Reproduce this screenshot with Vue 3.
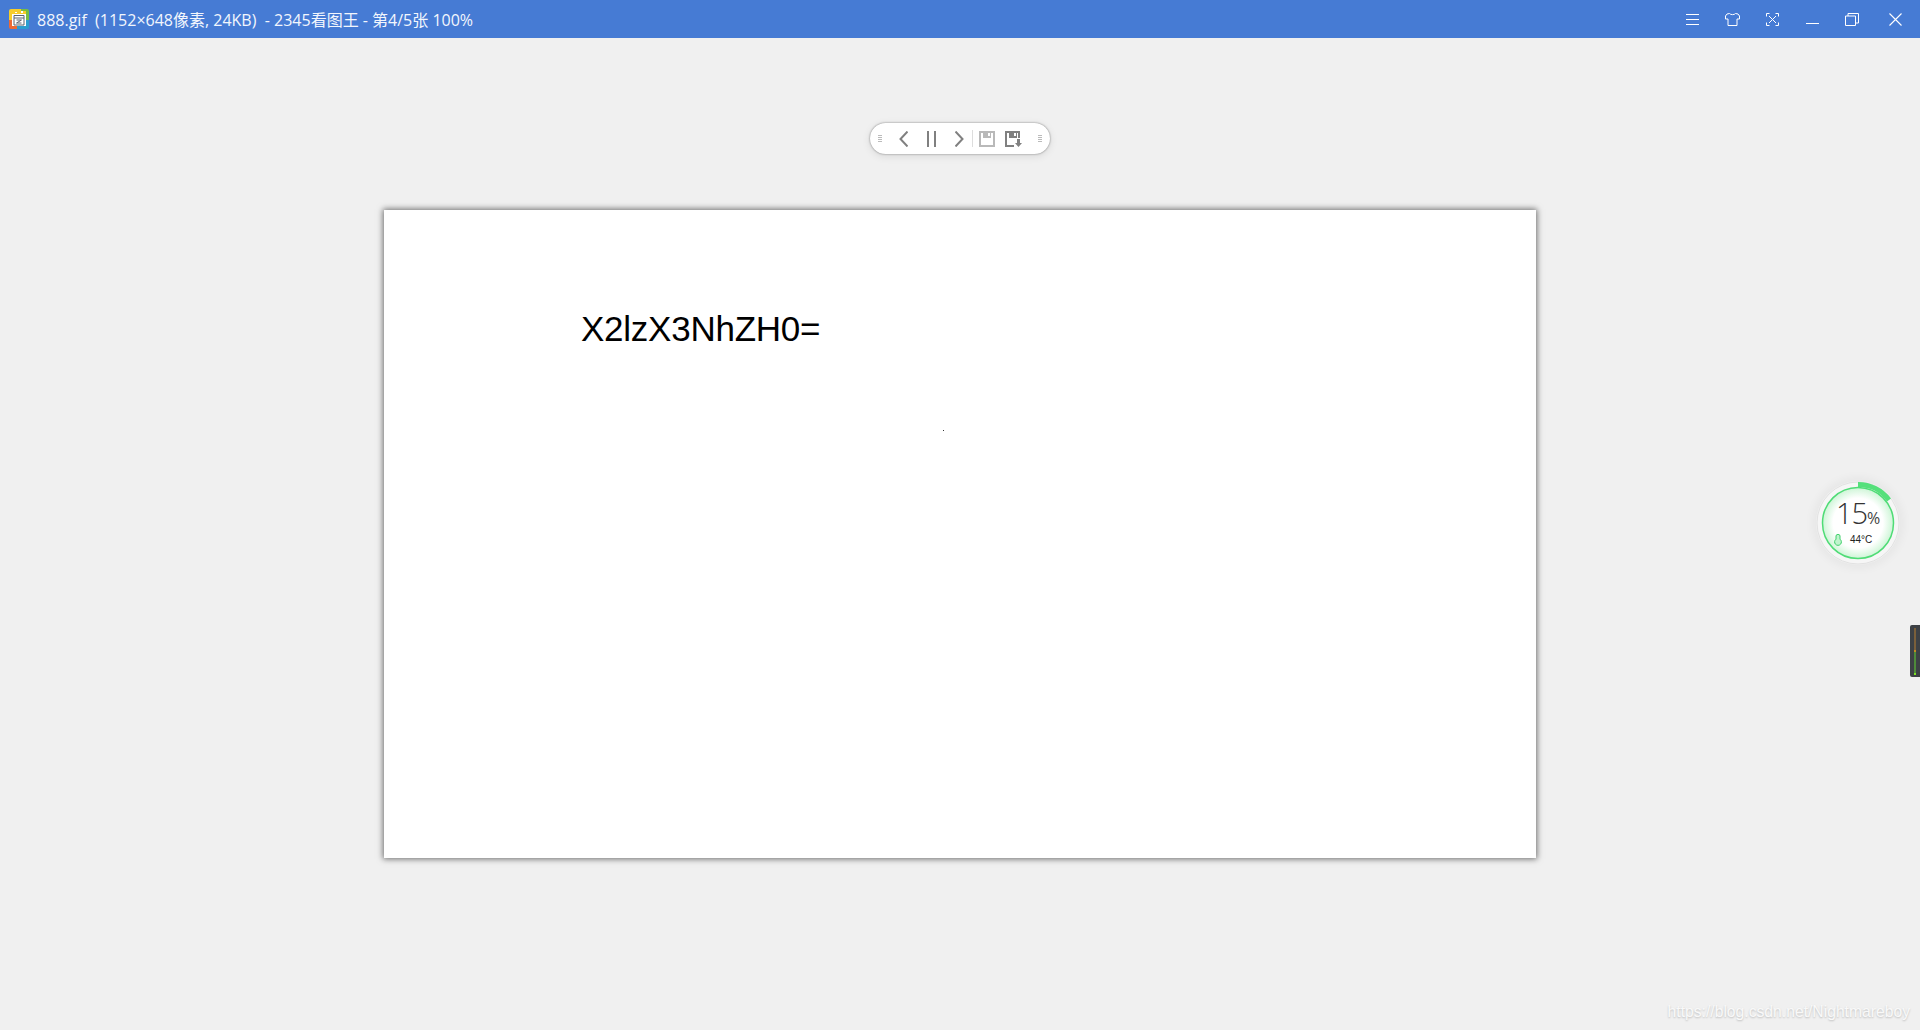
<script setup>
const title = '888.gif\u00a0\u00a0(1152×648像素, 24KB)\u00a0\u00a0- 2345看图王 - 第4/5张 100%'
</script>

<template>
  <div class="app">
    <header class="titlebar">
      <svg class="logo" width="20" height="20" viewBox="0 0 20 20">
        <path d="M2 0h10v11H0V2a2 2 0 0 1 2-2z" fill="#f7cd2a"/>
        <path d="M12 0h6a2 2 0 0 1 2 2v9h-8z" fill="#76bd45"/>
        <path d="M0 11h8v9H2a2 2 0 0 1-2-2z" fill="#ec6a35"/>
        <path d="M8 11h12v7a2 2 0 0 1-2 2H8z" fill="#2a9dcf"/>
        <rect x="3" y="3" width="14" height="14" fill="#fff"/>
        <path d="M3 2h3v2h2V2h4v2h2V2h3v3H3z" fill="#f7cd2a"/>
        <path d="M12 2h2v2h-2z" fill="#fff"/>
        <path d="M5 6.500h10v9.500H5zM5 9h10M7.500 11h5l-5 3h5" fill="none" stroke="#5b6470" stroke-width="1"/>
      </svg>
      <span class="title">{{ title }}</span>
      <div class="winbtns">
        <svg class="b-menu" width="13" height="11" viewBox="0 0 13 11"><path d="M0 .5h13M0 5.500h13M0 10.500h13" stroke="#fff" fill="none"/></svg>
        <svg class="b-skin" width="15" height="13" viewBox="0 0 15 13"><path d="M4.500.5 2 1 .5 3v3h2.500v6.500h9V6h2.500V3L13 1 10.500.5C9.500 2 5.500 2 4.500.5z" stroke="#fff" fill="none"/></svg>
        <svg class="b-full" width="13" height="13" viewBox="0 0 13 13"><path d="M.5 3.500v-3h3M9.500.5h3v3M12.500 9.500v3h-3M3.500 12.500h-3v-3M3 3l7 7M10 3l-7 7" stroke="#fff" fill="none"/></svg>
        <svg class="b-min" width="13" height="13" viewBox="0 0 13 13"><path d="M0 10.500h13" stroke="#fff" fill="none"/></svg>
        <svg class="b-max" width="14" height="13" viewBox="0 0 14 13"><path d="M.5 3h10v9.500H.5zM3 3V.5h10.500V10h-3" stroke="#fff" fill="none"/></svg>
        <svg class="b-close" width="13" height="13" viewBox="0 0 13 13"><path d="M.5.500l12 12M12.500.500l-12 12" stroke="#fff" stroke-width="1.100" fill="none"/></svg>
      </div>
    </header>

    <main class="stage">
      <div class="picture">
        <span class="picture-text">X2lzX3NhZH0=</span>
        <i class="speck"></i>
      </div>

      <div class="toolbar">
        <span class="grip"></span>
        <svg class="t-prev" width="9" height="16" viewBox="0 0 9 16"><path d="M8.500 .5 1.500 8l7 7.500" stroke="#808080" stroke-width="2" fill="none"/></svg>
        <svg class="t-pause" width="9" height="16" viewBox="0 0 9 16"><path d="M1 0v16M8 0v16" stroke="#808080" stroke-width="2" fill="none"/></svg>
        <svg class="t-next" width="9" height="16" viewBox="0 0 9 16"><path d="M.5 .5l7 7.500-7 7.500" stroke="#808080" stroke-width="2" fill="none"/></svg>
        <span class="sep"></span>
        <svg class="t-save" width="16" height="16" viewBox="0 0 16 16"><path d="M1 1h14v14H1z" fill="none" stroke="#b9b9b9" stroke-width="2"/><rect x="4" y="1" width="8" height="6" fill="#b9b9b9"/><rect x="9" y="2" width="2" height="3" fill="#fff"/></svg>
        <svg class="t-saveas" width="17" height="16" viewBox="0 0 17 16"><path d="M14 7V1H1v14h8" fill="none" stroke="#808080" stroke-width="2"/><rect x="4" y="1" width="8" height="6" fill="#808080"/><rect x="9" y="2" width="2" height="3" fill="#fff"/><path d="M12 8h3v4h2l-3.500 4-3.500-4h2z" fill="#808080"/></svg>
        <span class="grip"></span>
      </div>

      <div class="gauge">
        <svg class="gauge-ring" width="84" height="84" viewBox="0 0 84 84">
          <defs>
            <radialGradient id="gaugeFill" cx="50%" cy="50%" r="50%">
              <stop offset="0%" stop-color="#ffffff"/>
              <stop offset="70%" stop-color="#ffffff"/>
              <stop offset="100%" stop-color="#cdf5d6"/>
            </radialGradient>
          </defs>
          <circle cx="42" cy="42" r="41" fill="#f6f6f6" stroke="#e2e2e2" stroke-width="1"/>
          <path d="M42 3.500A38.500 38.500 0 0 1 73 19" fill="none" stroke="#55e07b" stroke-width="5"/>
          <circle cx="42" cy="42" r="35.500" fill="url(#gaugeFill)" stroke="#4fdc76" stroke-width="1.500"/>
        </svg>
        <div class="gauge-num">15<small>%</small></div>
        <div class="gauge-temp">
          <svg width="8" height="12" viewBox="0 0 8 12"><path d="M2 2a2 1.600 0 0 1 4 0v3.200a3.400 3.400 0 1 1-4 0z" fill="#bff4cd" stroke="#3fd06a" stroke-width="1"/></svg>
          <span>44°C</span>
        </div>
      </div>

      <div class="meter"><i class="meter-top"></i><i class="meter-mark"></i><i class="meter-bottom"></i><i class="meter-end"></i></div>

      <span class="watermark">https://blog.csdn.net/Nightmareboy</span>
    </main>
  </div>
</template>

<style>
html, body { margin: 0; background: #f0f0f0; }
</style>

<style scoped>
.app {
  width: 1920px;
  height: 1030px;
  display: flex;
  flex-direction: column;
  overflow: hidden;
  background: #f0f0f0;
  font-family: "Liberation Sans", Arial, sans-serif;
}
.titlebar {
  height: 38px;
  flex: none;
  display: flex;
  align-items: center;
  padding: 0 18px 0 9px;
  box-sizing: border-box;
  background: #467bd4;
  color: #fff;
}
.logo { flex: none; margin-right: 8px; }
.title {
  font-family: "Open Sans", "Noto Sans CJK SC", sans-serif;
  font-size: 16px;
  white-space: nowrap;
  color: #f2f6fd;
}
.winbtns {
  margin-left: auto;
  display: flex;
  align-items: center;
}
.winbtns svg { display: block; flex: none; }
.b-skin, .b-full, .b-max { margin-left: 26px; }
.b-min { margin-left: 27px; }
.b-close { margin-left: 30px; }
.stage {
  flex: 1;
  position: relative;
  display: flex;
  align-items: center;
  justify-content: center;
}
.picture {
  position: relative;
  width: 1152px;
  height: 648px;
  box-sizing: border-box;
  padding: 99px 0 0 197px;
  background: #fff;
  box-shadow: 0 0 6px 1px rgba(0, 0, 0, 0.55);
}
.picture-text {
  display: block;
  font-family: "Liberation Sans", Arial, sans-serif;
  font-size: 35px;
  letter-spacing: -0.25px;
  line-height: 40px;
  color: #000;
}
.speck {
  position: absolute;
  left: 559px;
  top: 220px;
  width: 1px;
  height: 1px;
  background: #333;
}
.toolbar {
  position: absolute;
  left: 870px;
  top: 85px;
  width: 180px;
  height: 31px;
  box-sizing: border-box;
  display: flex;
  align-items: center;
  border-radius: 16px;
  background: #fff;
  box-shadow: 0 0 2px rgba(0, 0, 0, 0.5), 0 2px 8px rgba(0, 0, 0, 0.1);
}
.toolbar svg { display: block; flex: none; }
.grip {
  flex: none;
  width: 4px;
  height: 7px;
  margin-left: 8px;
  background: repeating-linear-gradient(#bbb 0 1px, transparent 1px 2px);
}
.t-prev { margin-left: 17px; }
.t-pause { margin-left: 19px; }
.t-next { margin-left: 19px; }
.sep { flex: none; width: 1px; height: 17px; margin-left: 8px; background: #ddd; }
.t-save { margin-left: 6px; }
.t-saveas { margin-left: 10px; }
.toolbar .grip:last-child { margin-left: 16px; }
.gauge {
  position: absolute;
  left: 1816px;
  top: 443px;
  width: 84px;
  height: 84px;
  border-radius: 50%;
  box-shadow: 0 0 8px 4px rgba(0, 0, 0, 0.04);
}
.gauge-ring { position: absolute; left: 0; top: 0; }
.gauge-num {
  position: absolute;
  left: 20px;
  top: 15px;
  font-family: "Open Sans", sans-serif;
  font-weight: 300;
  font-size: 29px;
  line-height: 34px;
  letter-spacing: -1px;
  color: #333;
  white-space: nowrap;
}
.gauge-num small { font-size: 16px; font-weight: 400; letter-spacing: -0.5px; color: #444; }
.gauge-temp {
  position: absolute;
  left: 18px;
  top: 53px;
  display: flex;
  align-items: center;
  gap: 8px;
  font-family: "Liberation Sans", Arial, sans-serif;
  font-size: 10px;
  line-height: 12px;
  color: #222;
}
.gauge-temp svg { display: block; }
.meter {
  position: absolute;
  right: 0;
  top: 587px;
  width: 10px;
  height: 52px;
  background: #3d4145;
  border-radius: 2px 0 0 2px;
}
.meter i { position: absolute; left: 4px; width: 2px; }
.meter-top { top: 3px; height: 22px; background: #7a5f3a; }
.meter-mark { top: 25px; height: 2px; background: #c08a20; }
.meter-bottom { top: 27px; height: 21px; background: #4e8a3a; }
.meter-end { top: 48px; height: 2px; background: #7ee020; }
.watermark {
  position: absolute;
  right: 10px;
  bottom: 9px;
  font-family: "Liberation Sans", Arial, sans-serif;
  font-size: 15.7px;
  color: #f9f9f9;
  text-shadow: 0 1px 2px rgba(0, 0, 0, 0.22);
  white-space: nowrap;
}
</style>
